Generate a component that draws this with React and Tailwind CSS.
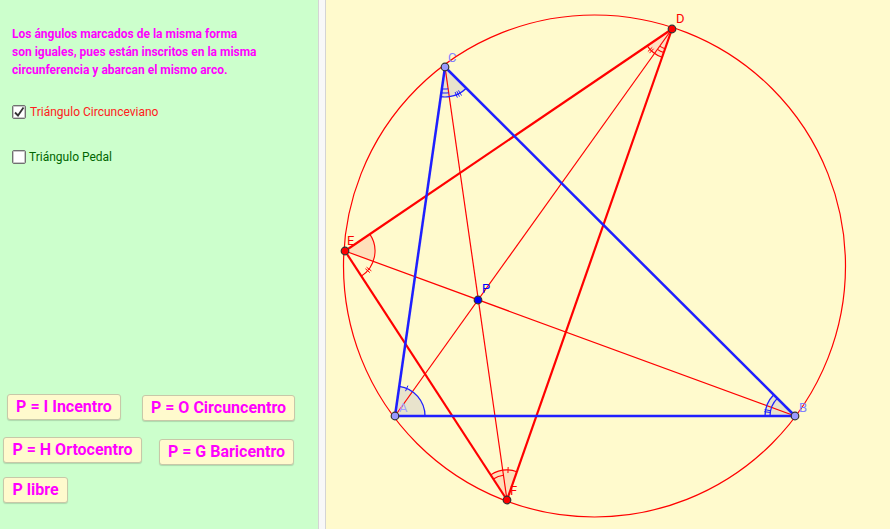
import React from "react";

const A = [395, 416];
const B = [795, 416];
const C = [445, 67];
const D = [672, 29];
const E = [345, 251];
const F = [507, 500];
const P = [478, 300];

const BLUE = "#1f1fff";
const RED = "#ff0000";

function pt(c, ang, r) {
  const a = (ang * Math.PI) / 180;
  return [c[0] + r * Math.cos(a), c[1] + r * Math.sin(a)];
}

function sector(c, a1, a2, r) {
  const p1 = pt(c, a1, r);
  const p2 = pt(c, a2, r);
  return `M ${c[0]} ${c[1]} L ${p1[0]} ${p1[1]} A ${r} ${r} 0 0 1 ${p2[0]} ${p2[1]} Z`;
}

function arc(c, a1, a2, r) {
  const p1 = pt(c, a1, r);
  const p2 = pt(c, a2, r);
  return `M ${p1[0]} ${p1[1]} A ${r} ${r} 0 0 1 ${p2[0]} ${p2[1]}`;
}

function Tick({ c, ang, r, len = 6, color, w = 1 }) {
  const p1 = pt(c, ang, r - len / 2);
  const p2 = pt(c, ang, r + len / 2);
  return <line x1={p1[0]} y1={p1[1]} x2={p2[0]} y2={p2[1]} stroke={color} strokeWidth={w} />;
}

function Seg({ a, b, color, w }) {
  return <line x1={a[0]} y1={a[1]} x2={b[0]} y2={b[1]} stroke={color} strokeWidth={w} />;
}

function Dot({ p, fill }) {
  return <circle cx={p[0]} cy={p[1]} r="3.8" fill={fill} stroke="#333" strokeWidth="1.2" />;
}

function Label({ x, y, color, children }) {
  return (
    <text x={x} y={y} fill={color} fontSize="13" fontFamily="Roboto, 'Liberation Sans', sans-serif">
      {children}
    </text>
  );
}

function Figure() {
  return (
    <svg className="w-full h-full" viewBox="326 0 564 529">
      <circle cx="594.5" cy="266" r="251" fill="none" stroke={RED} strokeWidth="1.2" />

      {/* angle shading */}
      <path d={sector(A, -81.8, 0, 30)} fill="#e6e0cc" opacity="0.9" />
      <path d={sector(B, 180, 224.9, 30)} fill="#e6e0cc" opacity="0.9" />
      <path d={sector(C, 44.9, 98.2, 30)} fill="#e6e0cc" opacity="0.9" />
      <path d={sector(D, 109.3, 145.8, 30)} fill="#ffdcc0" opacity="0.9" />
      <path d={sector(E, -34.2, 20.1, 30)} fill="#ffdcb8" opacity="0.9" />
      <path d={sector(F, -123, -70.7, 30)} fill="#ffdcb8" opacity="0.9" />

      {/* cevians */}
      <Seg a={A} b={D} color={RED} w={1.2} />
      <Seg a={B} b={E} color={RED} w={1.2} />
      <Seg a={C} b={F} color={RED} w={1.2} />

      {/* circunceviano */}
      <Seg a={D} b={E} color={RED} w={2.2} />
      <Seg a={E} b={F} color={RED} w={2.2} />
      <Seg a={F} b={D} color={RED} w={2.2} />

      {/* triangle ABC */}
      <Seg a={A} b={B} color={BLUE} w={2.5} />
      <Seg a={B} b={C} color={BLUE} w={2.5} />
      <Seg a={C} b={A} color={BLUE} w={2.5} />

      {/* angle arcs */}
      <path d={arc(A, -81.8, 0, 30)} fill="none" stroke={BLUE} strokeWidth="1.3" />
      <Tick c={A} ang={-67} r={30} color={BLUE} />

      <path d={arc(B, 180, 224.9, 30)} fill="none" stroke={BLUE} strokeWidth="1.3" />
      <path d={arc(B, 180, 224.9, 25)} fill="none" stroke={BLUE} strokeWidth="1.3" />
      <Tick c={B} ang={188} r={28} color={BLUE} />
      <Tick c={B} ang={192} r={28} color={BLUE} />

      <path d={arc(C, 44.9, 81.9, 30)} fill="none" stroke={BLUE} strokeWidth="1.3" />
      <Tick c={C} ang={60} r={30} color={BLUE} />
      <Tick c={C} ang={64} r={30} color={BLUE} />
      <Tick c={C} ang={68} r={30} color={BLUE} />
      <path d={arc(C, 81.9, 98.2, 30)} fill="none" stroke={BLUE} strokeWidth="1.2" />
      <path d={arc(C, 81.9, 98.2, 26)} fill="none" stroke={BLUE} strokeWidth="1.2" />
      <path d={arc(C, 81.9, 98.2, 22)} fill="none" stroke={BLUE} strokeWidth="1.2" />

      <path d={arc(D, 109.3, 145.8, 30)} fill="none" stroke={RED} strokeWidth="1.1" />
      <path d={arc(D, 109.3, 125.6, 25)} fill="none" stroke={RED} strokeWidth="1.1" />
      <path d={arc(D, 109.3, 125.6, 21)} fill="none" stroke={RED} strokeWidth="1.1" />
      <Tick c={D} ang={133} r={30} color={RED} />
      <Tick c={D} ang={137} r={30} color={RED} />

      <path d={arc(E, -34.2, 56.9, 30)} fill="none" stroke={RED} strokeWidth="1.1" />
      <Tick c={E} ang={37} r={30} color={RED} />
      <Tick c={E} ang={41} r={30} color={RED} />

      <path d={arc(F, -123, -70.7, 30)} fill="none" stroke={RED} strokeWidth="1.1" />
      <path d={arc(F, -123, -98.1, 25)} fill="none" stroke={RED} strokeWidth="1.1" />
      <Tick c={F} ang={-88} r={30} color={RED} />

      <Dot p={A} fill="#9999ff" />
      <Dot p={B} fill="#9999ff" />
      <Dot p={C} fill="#9999ff" />
      <Dot p={D} fill={RED} />
      <Dot p={E} fill={RED} />
      <Dot p={F} fill={RED} />
      <Dot p={P} fill="#0000ff" />

      <Label x={448} y={62} color="#8080ff">C</Label>
      <Label x={676} y={23} color={RED}>D</Label>
      <Label x={347} y={245} color={RED}>E</Label>
      <Label x={482} y={293} color="#0000ff">P</Label>
      <Label x={399} y={412} color="#a0a0ff">A</Label>
      <Label x={799} y={412} color="#8080ff">B</Label>
      <Label x={510} y={495} color={RED}>F</Label>
    </svg>
  );
}

function CheckBox({ checked }) {
  return (
    <div className="w-[14px] h-[14px] border border-[#707070] bg-white rounded-[2px] flex items-center justify-center shadow-[inset_0_0_0_1px_#c8c8c8]">
      {checked && (
        <svg width="12" height="12" viewBox="0 0 12 12">
          <path d="M2 6.5 L5 9.5 L10.5 1.5" fill="none" stroke="#333" strokeWidth="1.8" />
        </svg>
      )}
    </div>
  );
}

function Btn({ w, children, className = "" }) {
  return (
    <div
      className={`h-[26px] flex items-center justify-center bg-[#fffacd] border border-[#c8c8a8] rounded-[3px] shadow-[0_1px_1px_rgba(0,0,0,0.15)] text-[#ff00ff] font-bold text-[16px] ${className}`}
      style={{ width: w }}
    >
      {children}
    </div>
  );
}

export default function App() {
  return (
    <div className="flex h-[529px] w-[890px] overflow-hidden" style={{ fontFamily: "Roboto, 'Liberation Sans', sans-serif" }}>
      <div className="w-[318px] bg-[#ccffcc] flex flex-col">
        <p className="pt-[25px] pl-[12px] text-[12px] leading-[18px] font-bold text-[#ff00ff]">
          Los ángulos marcados de la misma forma
          <br />
          son iguales, pues están inscritos en la misma
          <br />
          circunferencia y abarcan el mismo arco.
        </p>

        <div className="flex items-center gap-[4px] pl-[12px] mt-[24px]">
          <CheckBox checked />
          <span className="text-[12px] leading-[18px] text-[#ff2020]">Triángulo Circunceviano</span>
        </div>
        <div className="flex items-center gap-[3px] pl-[12px] mt-[27px]">
          <CheckBox />
          <span className="text-[12px] leading-[18px] text-[#006600]">Triángulo Pedal</span>
        </div>

        <div className="mt-[228px] flex flex-col">
          <div className="flex items-start">
            <Btn w={114} className="ml-[7px]">P = I Incentro</Btn>
            <Btn w={153} className="ml-[21px] mt-[1px]">P = O Circuncentro</Btn>
          </div>
          <div className="flex items-start mt-[16px]">
            <Btn w={139} className="ml-[3px]">P = H Ortocentro</Btn>
            <Btn w={135} className="ml-[17px] mt-[2px]">P = G Baricentro</Btn>
          </div>
          <div className="flex mt-[12px]">
            <Btn w={65} className="ml-[3px]">P libre</Btn>
          </div>
        </div>
      </div>

      <div className="w-[8px] bg-[#f8f8f8] border-l border-r border-[#d4d4d4]" />

      <div className="flex-1 bg-[#fffacd]">
        <Figure />
      </div>
    </div>
  );
}
